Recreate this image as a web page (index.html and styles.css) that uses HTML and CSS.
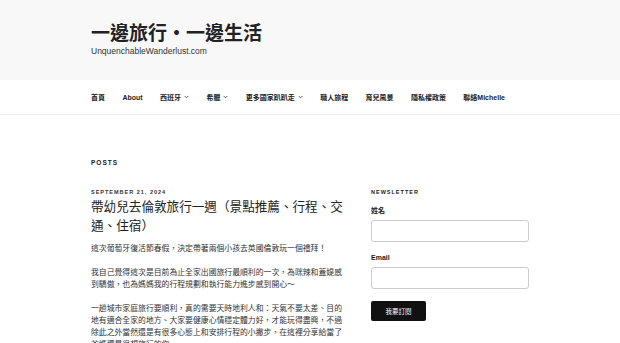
FILE: index.html
```html
<!DOCTYPE html>
<html lang="zh-Hant">
<head>
    <meta charset="UTF-8">
    <meta name="viewport" content="width=device-width, initial-scale=1.0">
    <title>一邊旅行・一邊生活</title>
    <link rel="stylesheet" href="styles.css">
</head>
<body>
    <!-- Header -->
    <header class="site-header">
        <div class="wrap">
            <div class="site-title">一邊旅行・一邊生活</div>
            <div class="site-desc">UnquenchableWanderlust.com</div>
        </div>
    </header>

    <!-- Navigation -->
    <nav class="main-nav">
        <ul class="wrap menu">
            <li>首頁</li>
            <li>About</li>
            <li>西班牙<svg class="caret" viewBox="0 0 6 4"><path d="M0.7 0.7 L3 3 L5.3 0.7"/></svg></li>
            <li>希臘<svg class="caret" viewBox="0 0 6 4"><path d="M0.7 0.7 L3 3 L5.3 0.7"/></svg></li>
            <li>更多國家趴趴走<svg class="caret" viewBox="0 0 6 4"><path d="M0.7 0.7 L3 3 L5.3 0.7"/></svg></li>
            <li>職人旅程</li>
            <li>育兒風景</li>
            <li>隱私權政策</li>
            <li>聯絡Michelle</li>
        </ul>
    </nav>

    <!-- Content -->
    <div class="wrap content">
        <h2 class="page-title">Posts</h2>
        <div class="columns">
            <main class="main">
                <div class="entry-date">September 21, 2024</div>
                <h1 class="entry-title">帶幼兒去倫敦旅行一週（景點推薦、行程、交通、住宿）</h1>
                <p>這次葡萄牙復活節春假，決定帶著兩個小孩去英國倫敦玩一個禮拜！</p>
                <p>我自己覺得這次是目前為止全家出國旅行最順利的一次，為咪辣和蓋媞感到驕傲，也為媽媽我的行程規劃和執行能力進步感到開心～</p>
                <p>一趟城市家庭旅行要順利，真的需要天時地利人和：天氣不要太差、目的地有適合全家的地方、大家要健康心情穩定體力好，才能玩得盡興，不過除此之外當然還是有很多心態上和安排行程的小撇步，在這裡分享給當了爸媽還是很想旅行的你～～</p>
            </main>

            <aside class="sidebar">
                <h3 class="widget-title">Newsletter</h3>
                <label class="field-label">姓名</label>
                <div class="field"></div>
                <label class="field-label">Email</label>
                <div class="field"></div>
                <button class="subscribe">我要訂閱</button>
            </aside>
        </div>
    </div>
</body>
</html>
```

FILE: styles.css
```css
body {
    margin: 0;
    font-family: "Liberation Sans", "Noto Sans CJK TC", sans-serif;
    color: #222;
    background: #fff;
}
.wrap {
    width: 438px;
    margin: 0 auto;
}
.site-header {
    background: #f8f8f8;
    height: 80px;
    box-sizing: border-box;
    padding-top: 24px;
}
.site-title {
    font-size: 19px;
    font-weight: bold;
    line-height: 20px;
    color: #222;
}
.site-desc {
    font-size: 8.5px;
    line-height: 12px;
    color: #333;
    margin-top: 1px;
}
.main-nav {
    height: 34px;
    border-bottom: 1px solid #eee;
}
.menu {
    list-style: none;
    padding: 0;
    display: flex;
    align-items: center;
    gap: 17.4px;
    height: 34px;
    font-size: 7px;
    font-weight: bold;
}
.menu li {
    display: flex;
    align-items: center;
}
.caret {
    width: 5px;
    height: 4px;
    margin-left: 3px;
    fill: none;
    stroke: #555;
    stroke-width: 1;
}
.content {
    padding-top: 44px;
}
.page-title {
    margin: 0;
    font-size: 6.5px;
    letter-spacing: 1px;
    text-transform: uppercase;
    font-weight: bold;
    line-height: 8px;
}
.columns {
    display: flex;
    gap: 28px;
    margin-top: 21px;
}
.main {
    width: 252px;
}
.entry-date {
    font-size: 5.5px;
    letter-spacing: 1px;
    text-transform: uppercase;
    font-weight: bold;
    line-height: 8px;
    color: #333;
}
.entry-title {
    margin: 2px 0 7px;
    font-size: 12.6px;
    font-weight: normal;
    line-height: 19px;
    color: #222;
}
.main p {
    margin: 0 0 12px;
    font-size: 7.85px;
    line-height: 12px;
    color: #333;
}
.sidebar {
    width: 158px;
    display: flex;
    flex-direction: column;
    align-items: flex-start;
}
.widget-title {
    margin: 0 0 10px;
    font-size: 5.5px;
    letter-spacing: 1px;
    text-transform: uppercase;
    font-weight: bold;
    line-height: 8px;
}
.field-label {
    font-size: 7px;
    font-weight: bold;
    line-height: 9px;
    margin-bottom: 5px;
}
.field {
    width: 158px;
    height: 22px;
    box-sizing: border-box;
    border: 1px solid #ccc;
    border-radius: 3px;
    background: #fff;
    margin-bottom: 11px;
}
.subscribe {
    margin-top: 1px;
    width: 55px;
    height: 20px;
    background: #111;
    color: #fff;
    border: none;
    border-radius: 2px;
    font-size: 6.5px;
    font-family: "Liberation Sans", "Noto Sans CJK TC", sans-serif;
    padding: 0;
}
```
